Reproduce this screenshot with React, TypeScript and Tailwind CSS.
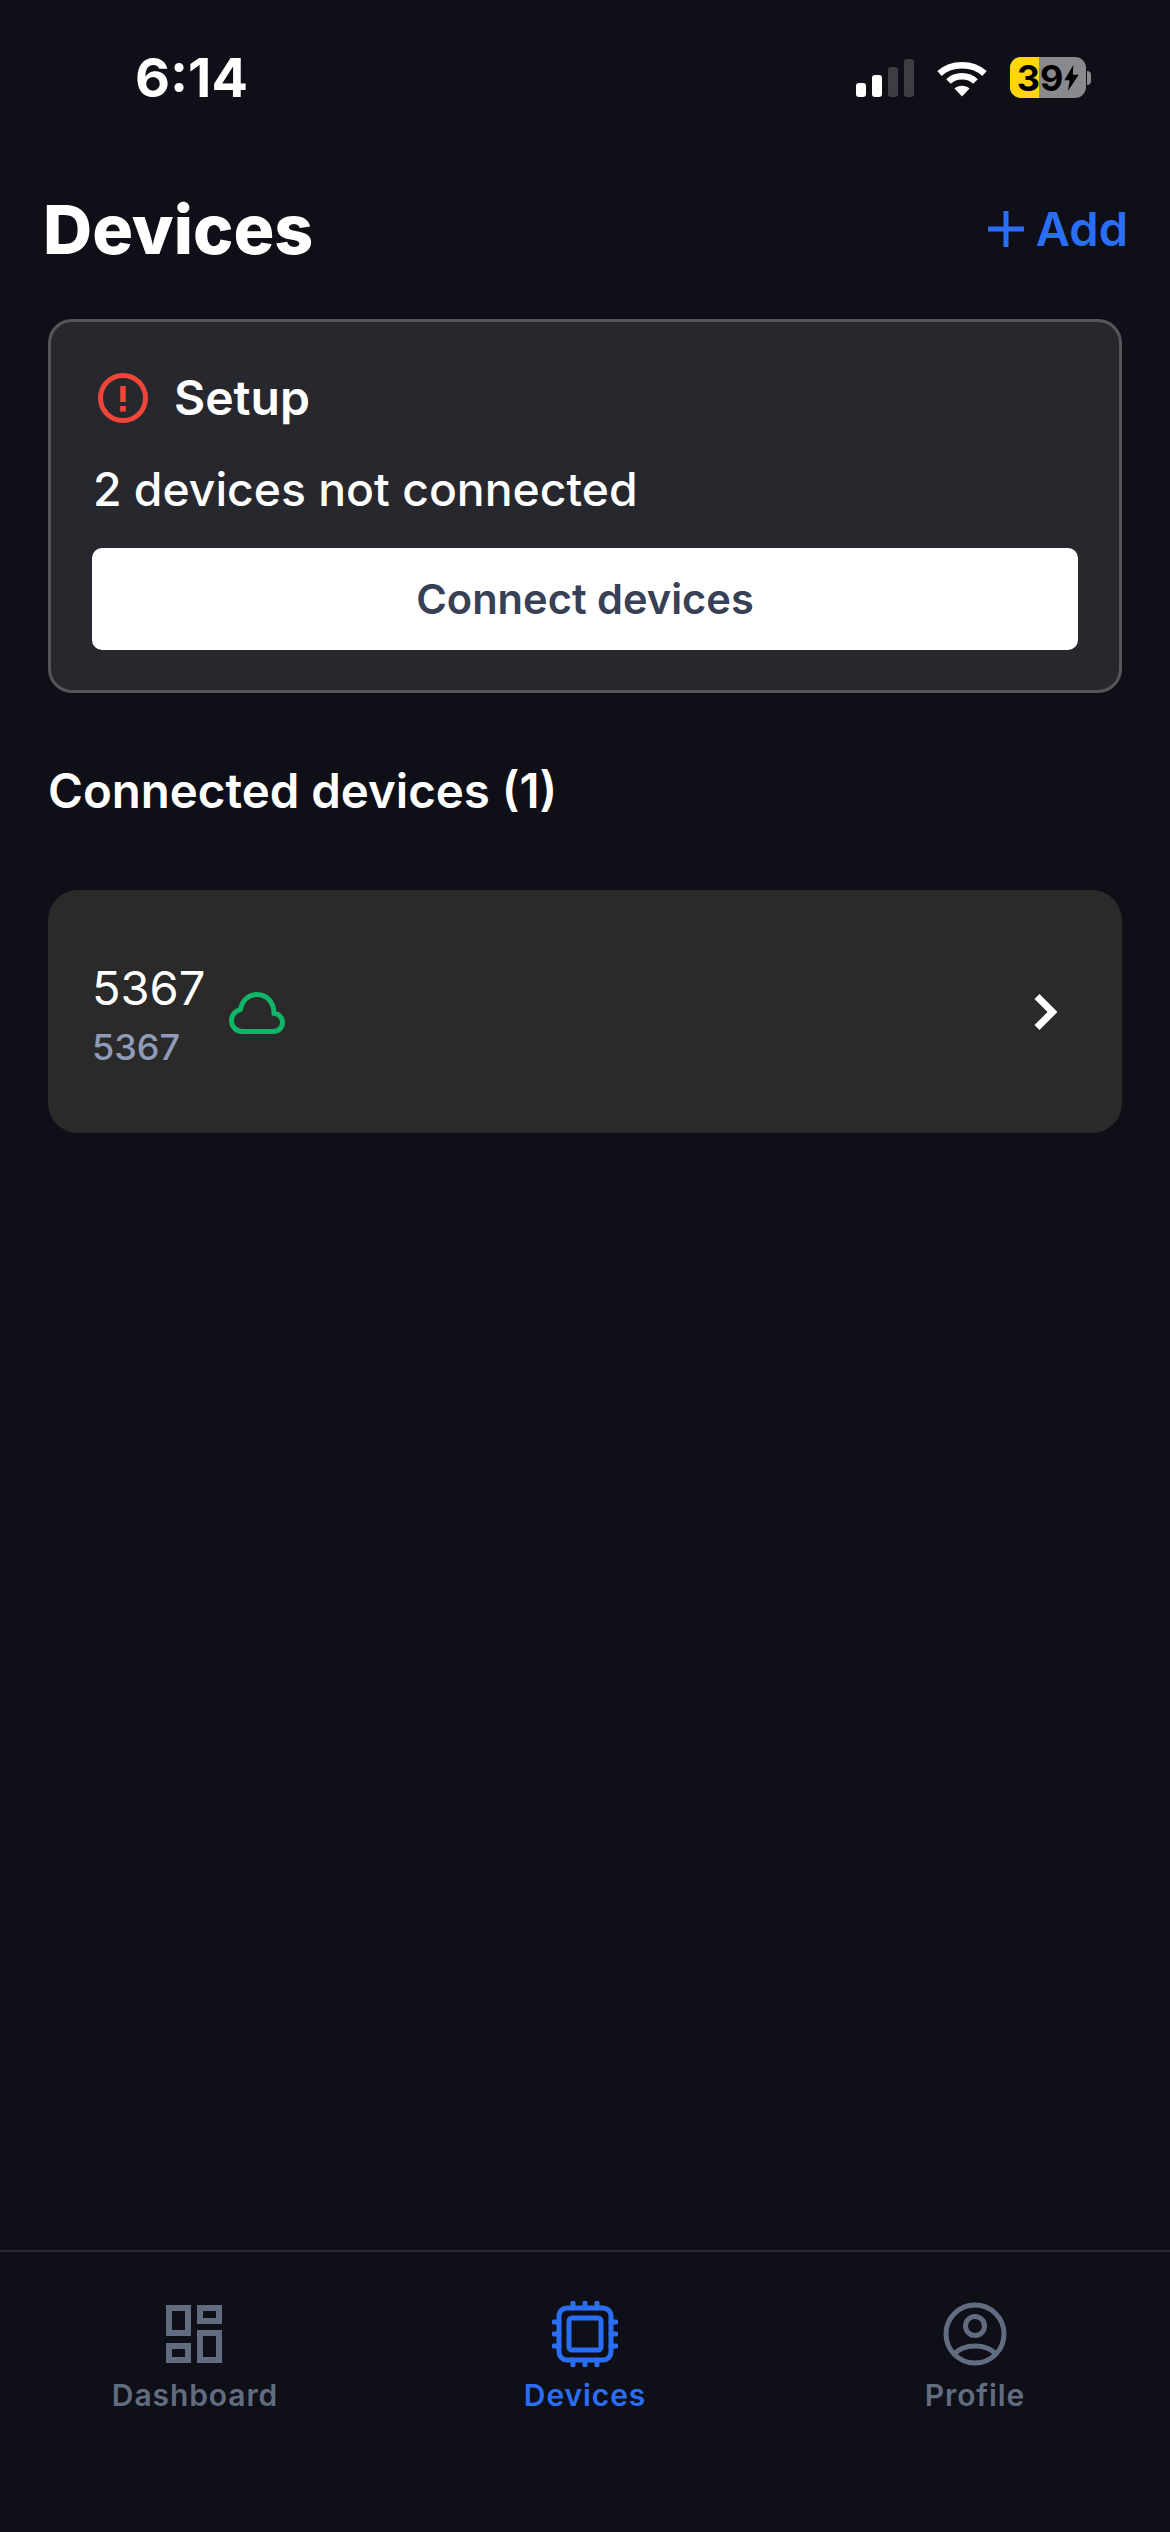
function StatusIcons() {
  return (
    <div className="flex items-center gap-[23px]">
      {/* Signal */}
      <svg width="58" height="38" viewBox="0 0 58 38">
        <rect x="0" y="24" width="10" height="14" rx="3" fill="#fff" />
        <rect x="16" y="16" width="10" height="22" rx="3" fill="#fff" />
        <rect x="32" y="8" width="10" height="30" rx="3" fill="#3d3d44" />
        <rect x="48" y="0" width="10" height="38" rx="3" fill="#3d3d44" />
      </svg>
      {/* Wifi */}
      <svg width="50" height="38" viewBox="0 0 50 38" fill="none">
        <path d="M2.5 14.5C14.500 3.500 35.500 3.500 47.500 14.500" stroke="#fff" strokeWidth="6.500" />
        <path d="M11.500 22.500C18.500 15.500 31.500 15.500 38.500 22.500" stroke="#fff" strokeWidth="6.500" />
        <path d="M25 37.500L17.500 29.500C21.500 25.800 28.500 25.800 32.500 29.500Z" fill="#fff" />
      </svg>
      {/* Battery */}
      <div className="flex items-center">
        <div className="relative flex h-[41px] w-[76px] items-center justify-center gap-[1px] overflow-hidden rounded-[11px] bg-[#8a8a8e]">
          <div className="absolute inset-y-0 left-0 w-[29px] bg-[#ffd60a]" />
          <span className="relative text-[36px] leading-none font-bold text-black">39</span>
          <svg className="relative" width="15" height="26" viewBox="0 0 16 29">
            <path d="M10 0L0 17H6L4 29L16 11H9.500Z" fill="#000" />
          </svg>
        </div>
        <div className="ml-[1px] h-[14px] w-[4px] rounded-r-full bg-[#8a8a8e]" />
      </div>
    </div>
  );
}

function TabItem({ label, active, children }: { label: string; active?: boolean; children: React.ReactNode }) {
  return (
    <div className="flex flex-1 flex-col items-center">
      <div className="flex h-[66px] items-center justify-center">{children}</div>
      <span
        className={`mt-[10px] text-[30px] leading-[36px] font-semibold tracking-[0.9px] ${
          active ? 'text-[#2b6ef6]' : 'text-[#626c81]'
        }`}
      >
        {label}
      </span>
    </div>
  );
}

export default function App() {
  return (
    <div className="flex h-[2532px] w-[1170px] flex-col bg-[#0e0f17] font-['Inter',sans-serif] text-white">
      {/* Status bar */}
      <div className="flex h-[185px] items-start justify-between pt-[49px] pr-[79px] pl-[135px]">
        <span className="text-[54px] leading-[58px] font-bold">6:14</span>
        <div className="pt-[8px]">
          <StatusIcons />
        </div>
      </div>

      {/* Header */}
      <div className="flex items-center justify-between pr-[42px] pl-[43px]">
        <h1 className="text-[68px] leading-[88px] font-extrabold">Devices</h1>
        <div className="flex items-center gap-[12px] text-[#2b6ef6]">
          <svg width="36" height="36" viewBox="0 0 36 36" fill="none" stroke="currentColor" strokeWidth="5">
            <path d="M18 0V36M0 18H36" />
          </svg>
          <span className="text-[47px] leading-[60px] font-semibold">Add</span>
        </div>
      </div>

      <div className="flex flex-1 flex-col px-[48px] pt-[46px]">
        {/* Setup card */}
        <div className="flex h-[374px] flex-col rounded-[24px] border-[3px] border-[#55565a] bg-[#27282e] px-[41px] pt-[51px]">
          <div className="flex items-center gap-[26px] pl-[6px]">
            <svg width="50" height="50" viewBox="0 0 50 50" fill="none">
              <circle cx="25" cy="25" r="22.500" stroke="#f1453a" strokeWidth="5" />
              <path d="M25 13V29" stroke="#f1453a" strokeWidth="5.500" />
              <rect x="22.200" y="33" width="5.600" height="5.600" fill="#f1453a" />
            </svg>
            <span className="text-[48px] leading-[50px] font-semibold">Setup</span>
          </div>
          <p className="mt-[39px] pl-[1px] text-[46.300px] leading-[54px] font-medium">2 devices not connected</p>
          <button className="mt-[32px] h-[102px] rounded-[10px] bg-white text-[41.600px] font-semibold text-[#374055]">
            Connect devices
          </button>
        </div>

        <h2 className="mt-[70px] text-[47.400px] leading-[56px] font-semibold">Connected devices (1)</h2>

        {/* Device row */}
        <div className="mt-[71px] flex h-[243px] items-center rounded-[30px] bg-[#2a2a2a] pr-[65px] pl-[44px]">
          <div className="flex flex-col pt-[6px]">
            <span className="text-[47px] leading-[56px]">5367</span>
            <span className="mt-[9px] text-[36px] leading-[44px] font-medium text-[#8f9bb8]">5367</span>
          </div>
          <svg className="mt-[2px] ml-[24px]" width="56" height="42" viewBox="0 0 56 42" fill="none">
            <path
              d="M13 39.500H44C49.500 39.500 53.500 35.500 53.500 30.500C53.500 25.500 49.500 21.500 45 21.500C45 10.500 38 2.500 28 2.500C19 2.500 13 9 11.500 17.500C6.500 18.500 2.500 23 2.500 28.500C2.500 34.500 7 39.500 13 39.500Z"
              stroke="#10b668"
              strokeWidth="5"
              strokeLinejoin="round"
            />
          </svg>
          {/* Chevron */}
          <svg className="ml-auto" width="24" height="38" viewBox="0 0 24 38" fill="none">
            <path d="M4 3.500L19.500 19L4 34.500" stroke="#fff" strokeWidth="7" />
          </svg>
        </div>
      </div>

      {/* Tab bar */}
      <div className="flex h-[282px] border-t-[2px] border-[#2a2b31] pt-[49px]">
        <TabItem label="Dashboard">
          <svg width="58" height="58" viewBox="0 0 58 58" fill="none" stroke="#626c81" strokeWidth="6">
            <rect x="3" y="3" width="19" height="25" />
            <rect x="34" y="3" width="19" height="13" />
            <rect x="3" y="41" width="19" height="14" />
            <rect x="34" y="28" width="19" height="27" />
          </svg>
        </TabItem>
        <TabItem label="Devices" active>
          <svg width="66" height="66" viewBox="0 0 66 66" fill="none" stroke="#2b6ef6" strokeWidth="5" strokeLinecap="round">
            <rect x="7" y="7" width="52" height="52" rx="8" />
            <rect x="17" y="17" width="32" height="32" rx="3" />
            <path d="M21 2V7M33 2V7M45 2V7M21 59V64M33 59V64M45 59V64M2 21H7M2 33H7M2 45H7M59 21H64M59 33H64M59 45H64" />
          </svg>
        </TabItem>
        <TabItem label="Profile">
          <svg width="64" height="64" viewBox="0 0 64 64" fill="none" stroke="#626c81" strokeWidth="5">
            <circle cx="32" cy="32" r="29" />
            <circle cx="32" cy="24" r="9.500" />
            <path d="M11 53C18 41 46 41 53 53" />
          </svg>
        </TabItem>
      </div>
    </div>
  );
}
